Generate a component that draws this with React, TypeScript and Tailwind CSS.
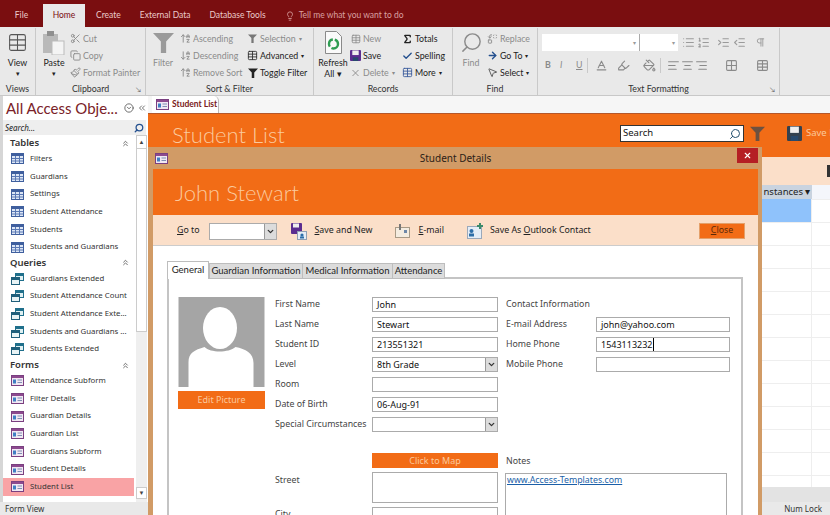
import {
  AlignCenter, AlignLeft, AlignRight, ArrowDownAZ, ArrowRight, ArrowUpAZ, Baseline, Check, ChevronDown,
  ChevronsLeft, ChevronsUp, CircleChevronDown, Copy, Grid2x2, Highlighter, Indent, Lightbulb, List,
  ListOrdered, MousePointer2, Outdent, PaintBucket, Paintbrush, Pilcrow, Replace, Scissors, Search, Sigma, Table, X,
} from "lucide-react";
import type { ReactNode } from "react";

const TableIcon = () => (
  <svg width="13" height="11" viewBox="0 0 13 11" className="shrink-0">
    <rect x="0.5" y="0.5" width="12" height="10" fill="#dce6f5" stroke="#3f5f9e" />
    <rect x="1" y="1" width="11" height="2" fill="#3f5f9e" />
    <path d="M1 5.5h11M1 8h11M4.5 3v7M8.5 3v7" stroke="#5a78b4" />
  </svg>
);

const QueryIcon = () => (
  <svg width="13" height="12" viewBox="0 0 13 12" className="shrink-0">
    <rect x="4.5" y="0.5" width="8" height="7" fill="#dff0f2" stroke="#1f6f8b" />
    <rect x="5" y="1" width="7" height="2" fill="#1f6f8b" />
    <rect x="0.5" y="4.5" width="8" height="7" fill="#e8f3f5" stroke="#1f5f7b" />
    <rect x="1" y="5" width="7" height="2" fill="#1f5f7b" />
  </svg>
);

const FormIcon = () => (
  <svg width="13" height="11" viewBox="0 0 13 11" className="shrink-0">
    <rect x="0.5" y="0.5" width="12" height="10" fill="#f1e8f3" stroke="#7a3f80" />
    <rect x="1" y="1" width="11" height="2" fill="#8d4a8f" />
    <rect x="2" y="4.5" width="3" height="4" fill="#3f7fc4" />
    <path d="M6.5 5h4.5M6.5 7.5h4.5" stroke="#7f8fb4" />
  </svg>
);

const BigFunnel = ({ size = 20, color = "#9a9a9a" }: { size?: number; color?: string }) => (
  <svg width={size} height={size} viewBox="0 0 20 20">
    <path d="M0 1h20l-7.5 8v11h-5V9z" fill={color} />
  </svg>
);

const SaveIcon = ({ size = 12, color = "#5b2d90" }: { size?: number; color?: string }) => (
  <svg width={size} height={size} viewBox="0 0 12 12" className="shrink-0">
    <rect width="12" height="12" rx="1" fill={color} />
    <rect x="2.5" y="0.5" width="7" height="5" fill="#efefef" />
    <rect x="3" y="8" width="6" height="4" fill="#27496d" />
  </svg>
);

function Small({ icon, label, off, caret }: { icon?: ReactNode; label: string; off?: boolean; caret?: boolean }) {
  return (
    <div className={`flex h-[17px] items-center gap-[2px] whitespace-nowrap ${off ? "text-[#8b8b8b]" : "text-[#222]"}`}>
      <span className="flex w-[11px] shrink-0 justify-center">{icon}</span>
      <span>{label}</span>
      {caret && <span className="ml-[1px] text-[6px]">▾</span>}
    </div>
  );
}

function Big({ icon, lines, off, caret }: { icon: ReactNode; lines: string[]; off?: boolean; caret?: boolean }) {
  return (
    <div className={`flex w-[30px] flex-col items-center leading-[11px] ${off ? "text-[#8b8b8b]" : "text-[#222]"}`}>
      <div className="flex h-[25px] items-center justify-center">{icon}</div>
      <div className="mt-[2px] text-center whitespace-nowrap">
        {lines.map((l) => (
          <div key={l}>{l}</div>
        ))}
      </div>
      {caret && <div className="text-[7px]">▾</div>}
    </div>
  );
}

function Group({ label, width, launcher, children }: { label: string; width: number; launcher?: boolean; children: ReactNode }) {
  return (
    <div className="relative flex h-[67px] shrink-0 flex-col border-r border-[#c9c9c9]" style={{ width }}>
      <div className="flex flex-1 pt-[2px]">{children}</div>
      <div className="relative h-[13px] text-center leading-[13px] text-[#333]">
        {label}
        {launcher && <span className="absolute top-[1px] right-[4px] text-[7px] text-[#666]">↘</span>}
      </div>
    </div>
  );
}

function Ribbon() {
  return (
    <div className="flex h-[69px] shrink-0 border-b border-[#c8c8c8] bg-[#e9e9e9] pt-[1px] font-['Lato',sans-serif] text-[8.8px]">
      <Group label="Views" width={36}>
        <div className="flex w-full justify-center">
          <Big icon={<Table size={21} strokeWidth={1.2} color="#555" />} lines={["View"]} caret />
        </div>
      </Group>
      <Group label="Clipboard" launcher width={110}>
        <div className="ml-[3px]">
          <Big
            icon={
              <svg width="22" height="24" viewBox="0 0 22 24">
                <rect x="0" y="3" width="15" height="19" fill="#b9b9b9" />
                <rect x="4" y="0" width="7" height="5" fill="#8f8f8f" />
                <rect x="9" y="10" width="12" height="14" fill="#f4f4f4" stroke="#bbb" />
              </svg>
            }
            lines={["Paste"]}
            caret
          />
        </div>
        <div className="ml-[1px] flex flex-col">
          <Small off icon={<Scissors size={11} />} label="Cut" />
          <Small off icon={<Copy size={11} />} label="Copy" />
          <Small off icon={<Paintbrush size={11} />} label="Format Painter" />
        </div>
      </Group>
      <Group label="Sort & Filter" width={168}>
        <div className="ml-[2px]">
          <Big off icon={<BigFunnel size={21} />} lines={["Filter"]} />
        </div>
        <div className="ml-[2px] flex w-[67px] flex-col">
          <Small off icon={<ArrowUpAZ size={11} />} label="Ascending" />
          <Small off icon={<ArrowDownAZ size={11} />} label="Descending" />
          <Small off icon={<ArrowUpAZ size={11} />} label="Remove Sort" />
        </div>
        <div className="flex flex-col">
          <Small off caret icon={<BigFunnel size={9} color="#777" />} label="Selection" />
          <Small caret icon={<Table size={11} color="#333" />} label="Advanced" />
          <Small icon={<BigFunnel size={10} color="#222" />} label="Toggle Filter" />
        </div>
      </Group>
      <Group label="Records" width={139}>
        <div className="ml-[4px]">
          <Big
            icon={
              <svg width="17" height="23" viewBox="0 0 17 23">
                <path d="M.5.5h11l5 5v17H.5z" fill="#fafafa" stroke="#8a8a8a" />
                <circle cx="8.5" cy="13" r="4.5" fill="none" stroke="#2f9d52" strokeWidth="2.4" strokeDasharray="9 2" />
              </svg>
            }
            lines={["Refresh", "All ▾"]}
          />
        </div>
        <div className="ml-[2px] flex w-[52px] flex-col">
          <Small off icon={<Table size={10} />} label="New" />
          <Small icon={<SaveIcon size={11} />} label="Save" />
          <Small off caret icon={<X size={12} />} label="Delete" />
        </div>
        <div className="flex flex-col">
          <Small icon={<Sigma size={12} strokeWidth={3} color="#222" />} label="Totals" />
          <Small icon={<Check size={12} strokeWidth={3} color="#24508f" />} label="Spelling" />
          <Small caret icon={<Table size={11} color="#3f5f9e" />} label="More" />
        </div>
      </Group>
      <Group label="Find" width={85}>
        <div className="ml-[3px]">
          <Big off icon={<Search size={23} strokeWidth={1.5} className="-scale-x-100" />} lines={["Find"]} />
        </div>
        <div className="ml-[1px] flex flex-col">
          <Small off icon={<Replace size={12} />} label="Replace" />
          <Small caret icon={<ArrowRight size={11} strokeWidth={3} color="#24508f" />} label="Go To" />
          <Small caret icon={<MousePointer2 size={11} color="#555" />} label="Select" />
        </div>
      </Group>
      <Group label="Text Formatting" launcher width={242}>
        <div className="flex flex-col pl-[4px]">
          <div className="flex h-[23px] items-start pt-[4px] text-[#9a9a9a]">
            <div className="flex h-[17px] w-[97px] items-center justify-end bg-white pr-[3px] text-[6px]">▾</div>
            <div className="flex h-[17px] w-[39px] items-center justify-end border-l border-[#aaa] bg-white pr-[3px] text-[6px]">▾</div>
            <List size={13} className="mt-[2px] ml-[4px]" />
            <ListOrdered size={13} className="mt-[2px] ml-[2px]" />
            <Indent size={13} className="mt-[2px] ml-[7px]" />
            <Outdent size={13} className="mt-[2px] ml-[3px]" />
            <Pilcrow size={11} className="mt-[3px] ml-[9px]" />
          </div>
          <div className="flex h-[24px] items-center text-[#8a8a8a]">
            <span className="ml-[3px] w-[15px] font-bold">B</span>
            <span className="w-[16px] italic">I</span>
            <span className="w-[11px] underline">U</span>
            <span className="mr-[7px] h-[15px] w-px bg-[#c9c9c9]" />
            <Baseline size={13} />
            <Highlighter size={13} className="ml-[9px]" />
            <PaintBucket size={13} className="ml-[13px]" />
            <span className="mr-[6px] ml-[4px] h-[15px] w-px bg-[#c9c9c9]" />
            <AlignLeft size={13} />
            <AlignCenter size={13} className="ml-[1px]" />
            <AlignRight size={13} className="ml-[1px]" />
            <Grid2x2 size={13} className="ml-[17px]" />
            <Table size={13} className="ml-[18px]" />
          </div>
        </div>
      </Group>
    </div>
  );
}

const tables = ["Filters", "Guardians", "Settings", "Student Attendance", "Students", "Students and Guardians"];
const queries = ["Guardians Extended", "Student Attendance Count", "Student Attendance Exte...", "Students and Guardians ...", "Students Extended"];
const forms = ["Attendance Subform", "Filter Details", "Guardian Details", "Guardian List", "Guardians Subform", "Student Details", "Student List"];

function NavHeader({ label }: { label: string }) {
  return (
    <div className="flex h-[14px] items-center justify-between pr-[6px] pl-[7px] text-[9.5px] font-semibold text-[#333]">
      {label}
      <ChevronsUp size={9} color="#444" />
    </div>
  );
}

function NavRow({ label, icon, active }: { label: string; icon: ReactNode; active?: boolean }) {
  return (
    <div className={`mr-[2px] flex h-[17.65px] items-center pl-[8px] text-[7.8px] whitespace-nowrap text-[#333] ${active ? "bg-[#f9a3a5]" : ""}`}>
      <span className="flex w-[19px] shrink-0">{icon}</span>
      {label}
    </div>
  );
}

function NavPane() {
  return (
    <div className="flex w-[148px] shrink-0 flex-col border-l-[3px] border-[#d6d6d6] bg-white">
      <div className="flex h-[24px] items-center gap-[3px] pl-[3px]">
        <span className="w-[115px] shrink-0 font-['Lato',sans-serif] text-[15px] leading-none whitespace-nowrap text-[#7a2228]">All Access Obje...</span>
        <CircleChevronDown size={10} color="#555" />
        <ChevronsLeft size={10} color="#555" />
      </div>
      <div className="mr-[2px] flex h-[15px] items-center justify-between bg-[#eeeeee] pr-[2px] pl-[2px] text-[8px] text-[#222] italic">
        Search...
        <Search size={10} strokeWidth={3} color="#24508f" className="-scale-x-100" />
      </div>
      <div className="flex flex-1">
        <div className="w-[133px] shrink-0 pt-[1px]">
          <NavHeader label="Tables" />
          {tables.map((t) => (
            <NavRow key={t} label={t} icon={<TableIcon />} />
          ))}
          <NavHeader label="Queries" />
          {queries.map((t) => (
            <NavRow key={t} label={t} icon={<QueryIcon />} />
          ))}
          <NavHeader label="Forms" />
          {forms.map((t) => (
            <NavRow key={t} label={t} icon={<FormIcon />} active={t === "Student List"} />
          ))}
        </div>
        <div className="flex w-[11px] flex-col bg-[#efefef]">
          <div className="flex h-[14px] items-center justify-center border border-[#ccc] bg-white text-[6px] text-[#444]">▲</div>
          <div className="h-[183px] border-x border-b border-[#ccc] bg-white" />
          <div className="flex-1" />
          <div className="mb-[3px] flex h-[12px] items-center justify-center border border-[#ccc] bg-white text-[6px] text-[#444]">▼</div>
        </div>
      </div>
    </div>
  );
}

function Background() {
  return (
    <div className="flex min-w-0 flex-1 flex-col bg-white">
      <div className="flex h-[17px] shrink-0 items-end bg-[#f6f6f6] pl-[4px]">
        <div className="flex h-[17px] w-[67px] items-center gap-[3px] rounded-tr-[5px] border-r border-[#bbb] bg-white pl-[4px] font-['Lato',sans-serif] text-[8.5px] font-bold whitespace-nowrap text-[#7a1a20]">
          <FormIcon />
          Student List
        </div>
      </div>
      <div className="flex h-[44px] shrink-0 items-start justify-between border-t border-[#b5572a] bg-[#f26c16] pt-[11px]">
        <span className="-mt-[3px] ml-[24px] font-['Lato',sans-serif] text-[22px] leading-[26px] font-light text-[#fbc99d]">Student List</span>
        <div className="flex items-center">
          <div className="flex h-[17px] w-[124px] items-center justify-between border border-[#333] bg-white pr-[2px] pl-[2px] text-[9.5px] text-[#111]">
            Search
            <Search size={12} strokeWidth={2} color="#24506f" className="-scale-x-100" />
          </div>
          <span className="ml-[6px]">
            <BigFunnel size={15} color="#6d5140" />
          </span>
          <span className="ml-[22px]">
            <SaveIcon size={15} color="#33414f" />
          </span>
          <span className="ml-[4px] w-[24px] overflow-hidden text-[9.5px] whitespace-nowrap text-[#fbc99d]">Save New</span>
        </div>
      </div>
      <div className="flex h-[28px] shrink-0 items-center justify-end bg-[#fbdfc9]">
        <div className="h-[12px] w-[3px] bg-[#333]" />
      </div>
      <div className="flex h-[14px] shrink-0 justify-end bg-[#f4f6fb]">
        <div className="flex w-[50px] items-center justify-center bg-[#c9d3df] text-[9.5px] text-[#222]">nstances&nbsp;▾</div>
        <div className="w-[18px]" />
      </div>
      <div className="flex flex-1 justify-end bg-[linear-gradient(#eeeeee_1px,transparent_1px)] bg-[length:100%_23px]">
        <div className="mr-[18px] w-[51px] border-r border-[#eeeeee]">
          <div className="h-[23px] bg-[#8fc2fb]" />
        </div>
      </div>
      <div className="h-[15px] shrink-0 bg-[#e3e3e3]" />
    </div>
  );
}

function Field({ value, combo, caret, className = "w-[126px]" }: { value?: string; combo?: boolean; caret?: boolean; className?: string }) {
  return (
    <div className={`flex h-[15px] items-center justify-between border border-[#ababab] bg-white pl-[4px] text-[9px] text-[#111] ${className}`}>
      <span>
        {value}
        {caret && <span className="ml-[0.5px] border-l border-black" />}
      </span>
      {combo && (
        <span className="flex h-full w-[12px] items-center justify-center border-l border-[#999] bg-[#dcdcdc]">
          <ChevronDown size={9} strokeWidth={3.5} color="#333" />
        </span>
      )}
    </div>
  );
}

const details = [
  { label: "First Name", value: "John" },
  { label: "Last Name", value: "Stewart" },
  { label: "Student ID", value: "213551321" },
  { label: "Level", value: "8th Grade", combo: true },
  { label: "Room" },
  { label: "Date of Birth", value: "06-Aug-91" },
  { label: "Special Circumstances", combo: true },
];

function Dialog() {
  return (
    <div className="absolute top-[147px] left-[148px] flex h-[368px] w-[614px] flex-col overflow-hidden border-r-[4px] border-l-[5px] border-[#d19b66]">
      <div className="relative flex h-[22px] shrink-0 items-center justify-center bg-[#d19b66] text-[10px] text-[#2b2118]">
        <span className="absolute left-[2px]">
          <FormIcon />
        </span>
        Student Details
        <span className="absolute top-[1px] right-[0px] flex h-[15px] w-[21px] items-center justify-center bg-[#b51f24]">
          <X size={9} strokeWidth={3} color="white" />
        </span>
      </div>
      <div className="flex h-[46px] shrink-0 items-center bg-[#f26c16] pl-[22px] font-['Lato',sans-serif] text-[22px] font-light text-[#fbc99d]">John Stewart</div>
      <div className="flex h-[31px] shrink-0 items-center border-b border-[#ccc] bg-[#fbdfc9] pt-[2px] text-[8.8px] text-[#222]">
        <span className="ml-[24px]">
          <u>G</u>o to
        </span>
        <div className="ml-[9px]">
          <Field combo className="w-[68px] !h-[17px]" />
        </div>
        <svg width="16" height="17" viewBox="0 0 16 17" className="ml-[14px] shrink-0">
          <rect x="0" y="0" width="11" height="11" rx="1" fill="#5b2d90" />
          <rect x="2" y="0.5" width="6" height="4" fill="#efefef" />
          <rect x="6.5" y="8.5" width="9" height="8" fill="#e4edf7" stroke="#8fa0b4" />
          <circle cx="11" cy="12" r="1.6" fill="#2d6ea8" />
          <rect x="9" y="13.5" width="4" height="2" fill="#2d6ea8" />
        </svg>
        <span className="ml-[8px]">
          <u>S</u>ave and New
        </span>
        <svg width="15" height="14" viewBox="0 0 15 14" className="ml-[23px]">
          <rect x="0.5" y="3.5" width="14" height="10" fill="#f4ece0" stroke="#a89a86" />
          <path d="M5 0v6" stroke="#777" strokeWidth="2" />
          <rect x="9" y="6" width="3" height="3" fill="#6d87a8" />
        </svg>
        <span className="ml-[8px]">
          <u>E</u>-mail
        </span>
        <svg width="17" height="16" viewBox="0 0 17 16" className="ml-[23px]">
          <rect x="0.5" y="3.5" width="14" height="12" fill="#e4edf7" stroke="#9aa8ba" />
          <circle cx="4.5" cy="8" r="2" fill="#2d6ea8" />
          <rect x="2" y="10.5" width="5" height="3" fill="#2d6ea8" />
          <path d="M13 0v6M10 3h6" stroke="#3c8a6a" strokeWidth="2" />
        </svg>
        <span className="ml-[6px]">
          Save As <u>O</u>utlook Contact
        </span>
        <div className="mr-[13px] ml-auto flex h-[16px] w-[46px] items-center justify-center border border-[#e4a06a] bg-[#f26c16] text-[#5d2a08]">
          <u>C</u>lose
        </div>
      </div>
      <div className="flex-1 bg-white pt-[15px] pl-[14px] text-[8.8px] text-[#444]">
        <div className="relative z-10 -mb-[2px] flex h-[18px] items-end font-['Lato',sans-serif] text-[9.5px] whitespace-nowrap text-[#222]">
          <div className="flex h-[18px] w-[42px] items-center justify-center border border-b-0 border-[#bdbdbd] bg-white">General</div>
          <div className="flex h-[16px] w-[94px] items-center justify-center border border-[#bdbdbd] bg-[#dcdcdc]">Guardian Information</div>
          <div className="flex h-[16px] w-[90px] items-center justify-center border border-l-0 border-[#bdbdbd] bg-[#dcdcdc]">Medical Information</div>
          <div className="flex h-[16px] w-[52px] items-center justify-center border border-l-0 border-[#bdbdbd] bg-[#dcdcdc]">Attendance</div>
        </div>
        <div className="flex h-[240px] w-[576px] border-t-2 border-r-2 border-l-2 border-[#c4c4c4] pt-[18px] pl-[9px]">
          <div className="w-[87px] shrink-0">
            <svg width="87" height="90" viewBox="0 0 86 90" className="block">
              <rect width="86" height="90" fill="#a5a5a5" />
              <ellipse cx="41.5" cy="31" rx="17" ry="21" fill="white" />
              <path d="M10 90V65C10 56 16 53 26 50 32 56 50 56 57 50 67 52 75 56 75 66V90Z" fill="white" />
            </svg>
            <div className="mt-[4px] flex h-[18px] items-center justify-center bg-[#f26c16] text-[9px] text-[#fbc99d]">Edit Picture</div>
          </div>
          <div className="ml-[10px] w-[223px] shrink-0">
            <div className="flex flex-col gap-[5px]">
              {details.map((d) => (
                <div key={d.label} className="flex items-center">
                  <span className="w-[97px] shrink-0 whitespace-nowrap">{d.label}</span>
                  <Field value={d.value} combo={d.combo} />
                </div>
              ))}
            </div>
            <div className="mt-[21px] ml-[97px] flex h-[15px] w-[126px] items-center justify-center bg-[#f26c16] text-[9px] text-[#fbc99d]">Click to Map</div>
            <div className="mt-[4px] flex items-start">
              <span className="w-[97px] shrink-0 pt-[2px]">Street</span>
              <Field className="w-[126px] !h-[31px]" />
            </div>
            <div className="mt-[4px] flex items-center">
              <span className="w-[97px] shrink-0">City</span>
              <Field />
            </div>
          </div>
          <div className="ml-[8px] flex-1">
            <div className="flex flex-col gap-[5px]">
              <div className="flex h-[15px] items-center">Contact Information</div>
              <div className="flex items-center">
                <span className="w-[90px] shrink-0">E-mail Address</span>
                <Field value="john@yahoo.com" className="w-[134px]" />
              </div>
              <div className="flex items-center">
                <span className="w-[90px] shrink-0">Home Phone</span>
                <Field value="1543113232" caret className="w-[134px]" />
              </div>
              <div className="flex items-center">
                <span className="w-[90px] shrink-0">Mobile Phone</span>
                <Field className="w-[134px]" />
              </div>
            </div>
            <div className="mt-[83px] flex h-[13px] items-center">Notes</div>
            <div className="mt-[5px] -ml-[1px] h-[60px] w-[222px] border border-[#ababab] pl-[1px] text-[#1b5fa8] underline">www.Access-Templates.com</div>
          </div>
        </div>
      </div>
    </div>
  );
}

export default function App() {
  const tabs = ["Create", "External Data", "Database Tools"];
  return (
    <div className="relative flex h-[515px] w-[830px] flex-col overflow-hidden bg-white font-['Noto_Sans',sans-serif] text-[9px]">
      <div className="flex h-[27px] shrink-0 items-end bg-[#7a0e10] font-['Lato',sans-serif] text-[8.5px] text-[#eccaca]">
        <div className="flex h-[27px] w-[43px] items-center justify-center pt-[4px]">File</div>
        <div className="flex h-[23px] w-[42px] items-center justify-center bg-[#e9e9e9] text-[#7a0e10]">Home</div>
        <div className="flex h-[27px] items-center gap-[19px] pt-[4px] pl-[11px] whitespace-nowrap">
          {tabs.map((t) => (
            <span key={t}>{t}</span>
          ))}
          <span className="flex items-center gap-[4px] text-[#d9a0a0]">
            <Lightbulb size={10} />
            Tell me what you want to do
          </span>
        </div>
      </div>
      <Ribbon />
      <div className="flex min-h-0 flex-1">
        <NavPane />
        <Background />
      </div>
      <div className="flex h-[13px] shrink-0 items-center justify-between bg-[#e9e9e9] pr-[8px] pl-[5px] text-[8px] text-[#333]">
        <span>Form View</span>
        <span>Num Lock</span>
      </div>
      <Dialog />
    </div>
  );
}
